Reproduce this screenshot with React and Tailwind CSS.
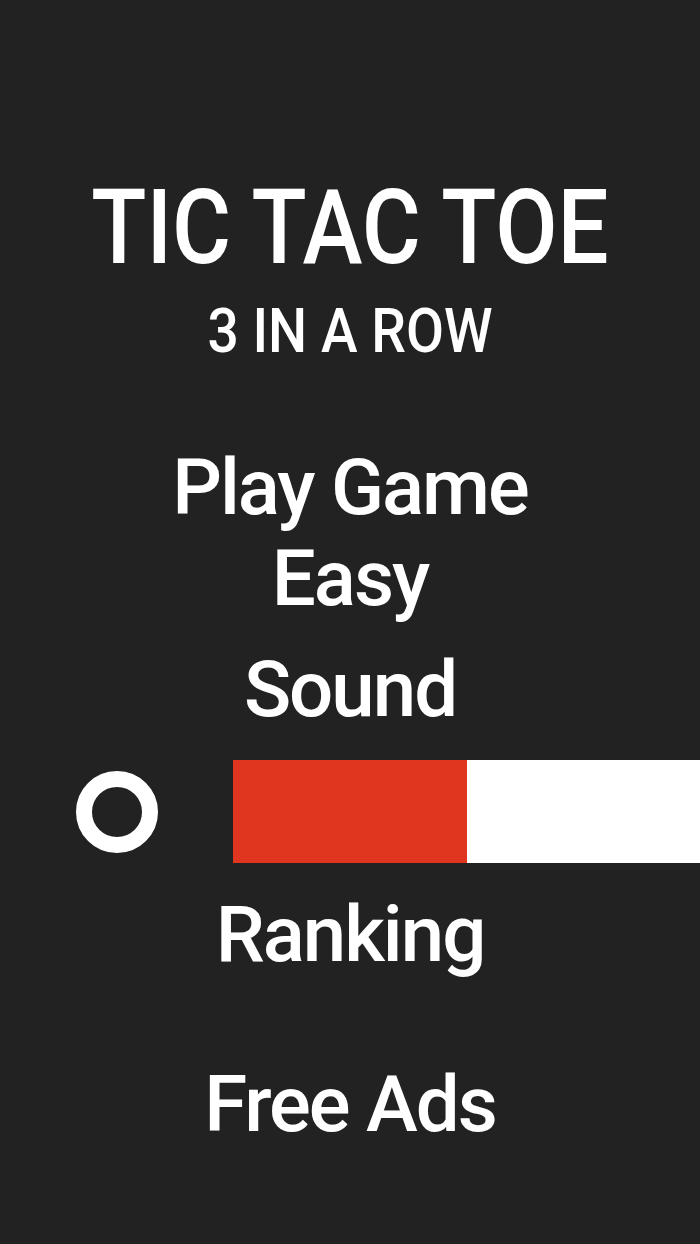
import React from 'react';

const menuText = "block w-full text-center text-[78px] leading-none font-medium tracking-[-2px]";

const App = () => {
    return (
        <div
            className="w-[700px] h-[1244px] bg-[#222222] text-white overflow-hidden"
            style={{ fontFamily: 'Roboto, "Noto Sans", sans-serif' }}
        >
            <div className="pt-[176px]">
                <h1 className="text-center text-[104px] leading-none font-medium scale-x-[0.87]">TIC TAC TOE</h1>
                <p className="mt-[20px] text-center text-[62px] leading-none font-medium scale-x-[0.89]">3 IN A ROW</p>
            </div>

            <div className="mt-[87px]">
                <button className={menuText}>Play Game</button>
                <button className={menuText + " mt-[13px]"}>Easy</button>
                <button className={menuText + " mt-[33px]"}>Sound</button>
            </div>

            {/* sound toggle */}
            <div className="mt-[31px] flex items-center pl-[76px]">
                <div className="w-[82px] h-[82px] rounded-full border-[16px] border-white shrink-0"></div>
                <div className="ml-[75px] flex flex-1 h-[103px]">
                    <div className="flex-1 bg-[#e0351f]"></div>
                    <div className="flex-1 bg-white"></div>
                </div>
            </div>

            <button className={menuText + " mt-[33px]"}>Ranking</button>
            <button className={menuText + " mt-[92px]"}>Free Ads</button>
        </div>
    );
};

export default App;
